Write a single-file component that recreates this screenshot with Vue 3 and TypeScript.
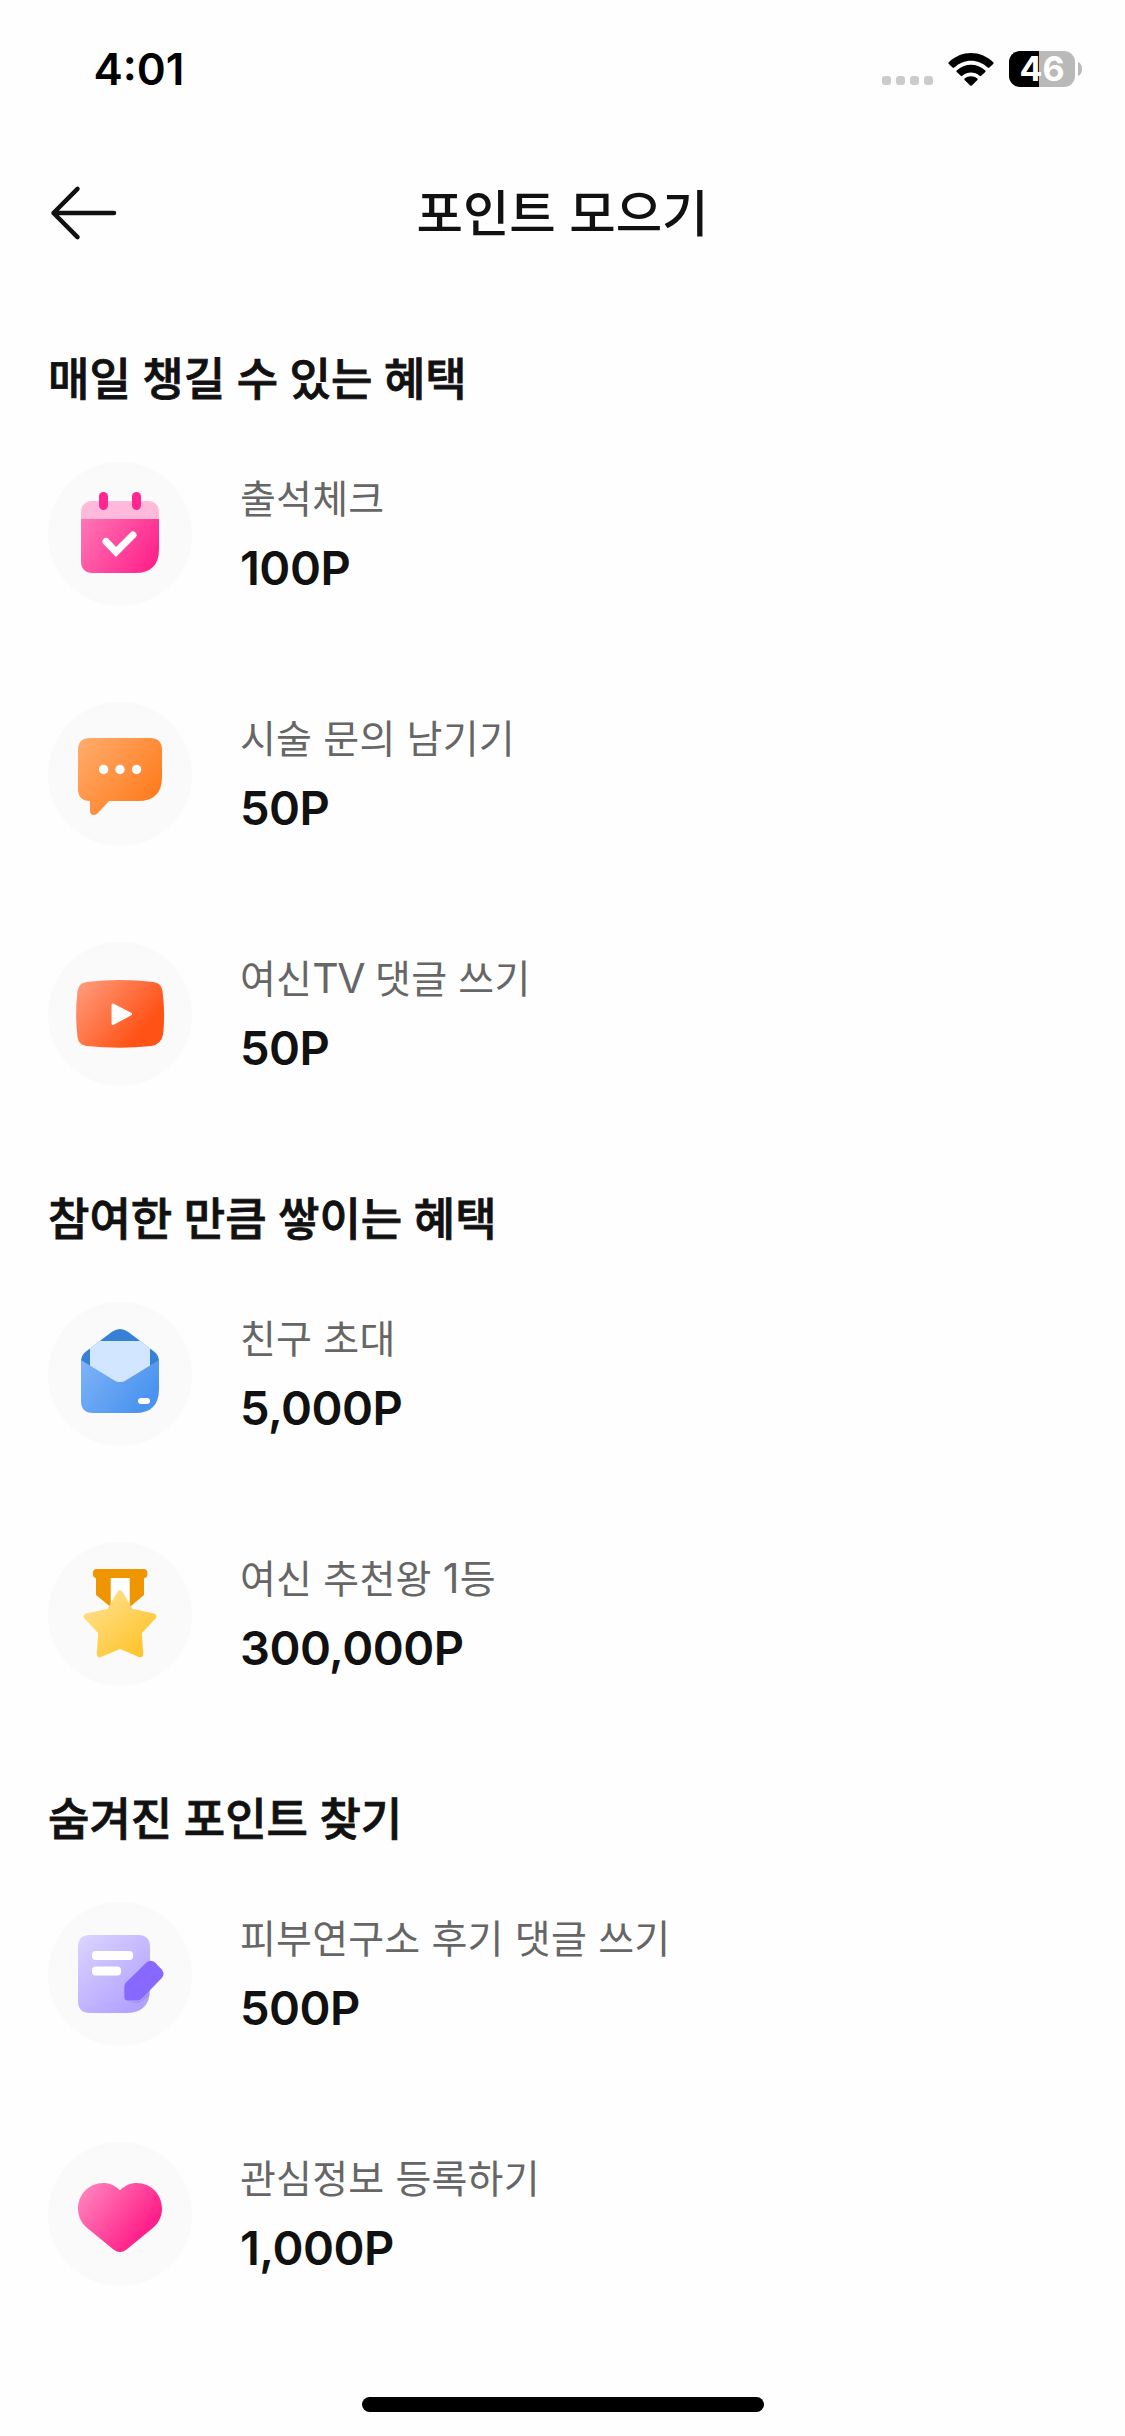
<script setup lang="ts">
type IconName = 'calendar' | 'chat' | 'video' | 'mail' | 'medal' | 'note' | 'heart'

interface TextRun {
  text: string
  kind?: 'latin' | 'digit'
}

interface Mission {
  icon: IconName
  label: TextRun[]
  point: string
}

interface Section {
  title: string
  missions: Mission[]
}

const sections: Section[] = [
  {
    title: '매일 챙길 수 있는 혜택',
    missions: [
      { icon: 'calendar', label: [{ text: '출석체크' }], point: '100P' },
      { icon: 'chat', label: [{ text: '시술 문의 남기기' }], point: '50P' },
      {
        icon: 'video',
        label: [{ text: '여신' }, { text: 'TV', kind: 'latin' }, { text: ' 댓글 쓰기' }],
        point: '50P',
      },
    ],
  },
  {
    title: '참여한 만큼 쌓이는 혜택',
    missions: [
      { icon: 'mail', label: [{ text: '친구 초대' }], point: '5,000P' },
      {
        icon: 'medal',
        label: [{ text: '여신 추천왕 ' }, { text: '1', kind: 'digit' }, { text: '등' }],
        point: '300,000P',
      },
    ],
  },
  {
    title: '숨겨진 포인트 찾기',
    missions: [
      { icon: 'note', label: [{ text: '피부연구소 후기 댓글 쓰기' }], point: '500P' },
      { icon: 'heart', label: [{ text: '관심정보 등록하기' }], point: '1,000P' },
    ],
  },
]
</script>

<template>
  <div class="screen">
    <div class="status">
      <span class="time">4:01</span>
      <div class="indicators">
        <svg class="signal" width="51" height="9" viewBox="0 0 51 9" fill="#cbcbcb">
          <rect width="9" height="9" rx="3" />
          <rect x="14" width="9" height="9" rx="3" />
          <rect x="28" width="9" height="9" rx="3" />
          <rect x="42" width="9" height="9" rx="3" />
        </svg>
        <svg class="wifi" width="46" height="33" viewBox="0 0 46 33">
          <path d="M.8 9.3Q0 10.1.8 10.9L4.6 14.6Q5.4 15.3 6.3 14.5C15.8 5.4 30.2 5.4 39.7 14.5Q40.6 15.3 41.4 14.6L45.2 10.9Q46 10.1 45.2 9.3C32.6-3.1 13.4-3.1.8 9.3Z" />
          <path d="M8.7 17.4Q8 18.2 8.7 19L12.8 22.8Q13.6 23.5 14.4 22.8C19.4 18.5 26.6 18.5 31.6 22.8Q32.4 23.5 33.2 22.8L37.3 19Q38 18.2 37.3 17.4C29.1 9.8 16.9 9.8 8.7 17.4Z" />
          <path d="M16.6 25.4Q16 26.2 16.6 26.9L22.2 32.4Q23 33.2 23.8 32.4L29.4 26.9Q30 26.2 29.4 25.4C25.7 22.4 20.3 22.4 16.6 25.4Z" />
        </svg>
        <div class="battery"><span>46</span></div>
        <svg class="nub" width="4" height="14" viewBox="0 0 4 14" fill="#b9b9b9">
          <path d="M0 0C2.6 1 4 3.600 4 7S2.600 13 0 14Z" />
        </svg>
      </div>
    </div>

    <header class="bar">
      <svg class="back" width="72" height="60" viewBox="0 0 72 60" fill="none" stroke="#111" stroke-width="4.500" stroke-linecap="round" stroke-linejoin="round">
        <path d="M66 30H5.500M29.500 5.800 5.500 30 29.500 54.200" />
      </svg>
      <h1>포인트 모으기</h1>
      <span class="spacer"></span>
    </header>

    <main>
      <section v-for="section in sections" :key="section.title">
        <h2>{{ section.title }}</h2>
        <ul>
          <li v-for="m in section.missions" :key="m.icon">
            <div class="badge">
              <svg v-if="m.icon === 'calendar'" viewBox="0 0 144 144">
                <defs>
                  <linearGradient id="calendar-fill" x1="34" y1="60" x2="106" y2="106" gradientUnits="userSpaceOnUse">
                    <stop stop-color="#ff74b4" /><stop offset="1" stop-color="#ff2089" />
                  </linearGradient>
                </defs>
                <path d="M33 57V51Q33 39 45 39H99Q111 39 111 51V57Z" fill="#ffbadb" />
                <path d="M33 57H111V87Q111 111 87 111H45Q33 111 33 99Z" fill="url(#calendar-fill)" />
                <rect x="51" y="30" width="9" height="18" rx="4.500" fill="#ff268f" />
                <rect x="84" y="30" width="9" height="18" rx="4.500" fill="#ff268f" />
                <path d="M58 79.500 68 90 85 73" fill="none" stroke="#fff" stroke-width="7" stroke-linecap="round" />
              </svg>

              <svg v-else-if="m.icon === 'chat'" viewBox="0 0 144 144">
                <defs>
                  <linearGradient id="chat-fill" x1="32" y1="40" x2="106" y2="100" gradientUnits="userSpaceOnUse">
                    <stop stop-color="#ffab6b" /><stop offset="1" stop-color="#ff7b1c" />
                  </linearGradient>
                </defs>
                <path d="M42 36H102Q114 36 114 48V75Q114 99 90 99H61L50 111Q48 113 46 113Q42 113 42 109V99Q30 99 30 87V48Q30 36 42 36Z" fill="url(#chat-fill)" />
                <g fill="#fff">
                  <circle cx="55.600" cy="67.500" r="4.700" />
                  <circle cx="72" cy="67.500" r="4.700" />
                  <circle cx="88.600" cy="67.500" r="4.700" />
                </g>
              </svg>

              <svg v-else-if="m.icon === 'video'" viewBox="0 0 144 144">
                <defs>
                  <linearGradient id="video-fill" x1="30" y1="42" x2="90" y2="94" gradientUnits="userSpaceOnUse">
                    <stop stop-color="#ff9b7b" /><stop offset="1" stop-color="#ff5217" />
                  </linearGradient>
                </defs>
                <path d="M38.500 40Q72 36.200 105.500 40Q113.500 41 114.500 49Q117.300 70 115.200 92Q113.500 102 103.500 104Q72 107.600 38.500 104Q30.500 103 29.500 95Q26.700 72 29.500 49Q30.500 41 38.500 40Z" fill="url(#video-fill)" />
                <path d="M65 63 82.500 72 65 81.500Z" fill="#fff" stroke="#fff" stroke-width="3" stroke-linejoin="round" />
              </svg>

              <svg v-else-if="m.icon === 'mail'" viewBox="0 0 144 144">
                <defs>
                  <linearGradient id="mail-fill" x1="34" y1="62" x2="92" y2="108" gradientUnits="userSpaceOnUse">
                    <stop stop-color="#7db2f7" /><stop offset="1" stop-color="#4a94ef" />
                  </linearGradient>
                </defs>
                <path d="M33 60Q33 53 38 49.500L64 29.800Q72 24.200 80 29.800L106 49.500Q111 53 111 60L102 66H42Z" fill="#3680d5" />
                <path d="M42 46 52 39H92L102 46V66L72 84 42 66Z" fill="#d3e6ff" />
                <path d="M33 58 66 78.200Q72 82 78 78.200L111 58V87Q111 111 87 111H45Q33 111 33 99Z" fill="url(#mail-fill)" />
                <rect x="90" y="96" width="12" height="6" rx="3" fill="#fff" />
              </svg>

              <svg v-else-if="m.icon === 'medal'" viewBox="0 0 144 144">
                <defs>
                  <linearGradient id="medal-fill" x1="50" y1="62" x2="92" y2="112" gradientUnits="userSpaceOnUse">
                    <stop stop-color="#ffdc80" /><stop offset="1" stop-color="#fec42c" />
                  </linearGradient>
                </defs>
                <path d="M62 35H82V64H62Z" fill="#fff" />
                <path d="M48 34H62.700V65L48 53ZM81.700 34H96V53L81.700 65Z" fill="#ef9500" />
                <rect x="45" y="27" width="54.300" height="9" rx="3.500" fill="#ef9500" />
                <path d="M72 51.500 82.500 69.500 105.300 74.500 90.800 90 92.200 112.300 72 103.700 51.800 112.300 53.200 90 38.700 74.500 61.500 69.500Z" fill="url(#medal-fill)" stroke="url(#medal-fill)" stroke-width="6" stroke-linejoin="round" />
              </svg>

              <svg v-else-if="m.icon === 'note'" viewBox="0 0 144 144">
                <defs>
                  <linearGradient id="note-fill" x1="32" y1="38" x2="88" y2="104" gradientUnits="userSpaceOnUse">
                    <stop stop-color="#dad2ff" /><stop offset="1" stop-color="#b3a2ff" />
                  </linearGradient>
                </defs>
                <path d="M42 33H90Q102 33 102 45V87Q102 111 78 111H42Q30 111 30 99V45Q30 33 42 33Z" fill="url(#note-fill)" />
                <rect x="44" y="49" width="41" height="9" rx="3.500" fill="#fff" />
                <rect x="44" y="64.500" width="29" height="9" rx="3.500" fill="#fff" />
                <path d="M79 99.500H89Q92 99.500 94 97.500L101 90.500V94L94 99Q91 101.500 87 101Z" fill="#9a85f2" opacity=".6" />
                <path d="M78 80.500 98.500 60.500Q103 57 107 60.500L113.800 67.500Q117.300 72 113.800 76L94 96.500Q92 98.500 89 98.500H80Q76.300 98.500 76.300 95V85Q76.300 82.200 78 80.500Z" fill="#8869ff" />
              </svg>

              <svg v-else viewBox="0 0 144 144">
                <defs>
                  <linearGradient id="heart-fill" x1="36" y1="46" x2="94" y2="92" gradientUnits="userSpaceOnUse">
                    <stop stop-color="#ff82bd" /><stop offset="1" stop-color="#ff2089" />
                  </linearGradient>
                </defs>
                <path d="M72 48.300C67.500 43.500 61.500 41 55.300 41C41 41 30 52.500 30 66.500C30 76 34.500 82.500 41 87.500L65.500 107.500Q72 112.500 78.500 107.500L103 87.500C109.500 82.500 114 76 114 66.500C114 52.500 103 41 88.700 41C82.500 41 76.500 43.500 72 48.300Z" fill="url(#heart-fill)" />
              </svg>
            </div>
            <div class="copy">
              <p class="label"><span v-for="(run, i) in m.label" :key="i" :class="run.kind">{{ run.text }}</span></p>
              <strong class="point">{{ m.point }}</strong>
            </div>
          </li>
        </ul>
      </section>
    </main>

    <div class="home"></div>
  </div>
</template>

<style>
body {
  background: #fefefe;
}
</style>

<style scoped>
.screen {
  display: flex;
  flex-direction: column;
  box-sizing: border-box;
  width: 1125px;
  height: 2436px;
  overflow: hidden;
  background: #fefefe;
  color: #111;
  font-family: "Noto Sans CJK KR", sans-serif;
}

.status {
  display: flex;
  justify-content: space-between;
  align-items: center;
  flex: none;
  height: 138px;
  padding: 0 43px 0 93.500px;
  color: #000;
  box-sizing: border-box;
}

.time {
  font: 600 44px/60px Inter, sans-serif;
}

.indicators {
  display: flex;
  align-items: center;
}

.signal {
  margin: 23px 15px 0 0;
}

.wifi {
  margin-right: 15px;
}

.battery {
  width: 66px;
  height: 36px;
  border-radius: 11px;
  background: linear-gradient(90deg, #000 30px, #b9b9b9 30px);
  color: #fff;
  text-align: center;
  font: 700 34px/36px Inter, sans-serif;
  margin-right: 3px;
}

.bar {
  display: flex;
  align-items: center;
  justify-content: space-between;
  flex: none;
  height: 150px;
  padding: 0 48px;
}

.spacer {
  width: 72px;
}

h1 {
  margin: 0 0 6px;
  font-size: 50.500px;
  line-height: 72px;
  font-weight: 500;
  word-spacing: 2px;
}

main {
  flex: 1;
  padding: 59px 48px 0;
}

h2 {
  margin: 0 0 55px;
  font-size: 45px;
  line-height: 60px;
  font-weight: 500;
  word-spacing: 1.400px;
  -webkit-text-stroke: .8px #111;
}

ul {
  display: flex;
  flex-direction: column;
  gap: 96px;
  margin: 0 0 101px;
  padding: 0;
  list-style: none;
}

li {
  display: flex;
  gap: 48px;
  height: 144px;
}

.badge {
  flex: none;
  width: 144px;
  height: 144px;
  border-radius: 50%;
  background: #fafafa;
}

.badge svg {
  display: block;
}

.copy {
  display: flex;
  flex-direction: column;
  padding-top: 4px;
}

.label {
  margin: 0;
  height: 60px;
  font-size: 39px;
  line-height: 60px;
  letter-spacing: .2px;
  word-spacing: 2.200px;
  color: #666;
  white-space: pre;
}

.latin,
.digit {
  font-family: Inter, sans-serif;
  font-size: 41px;
}

.latin {
  letter-spacing: -1.500px;
}

.digit {
  letter-spacing: .4px;
}

.point {
  margin-top: 6px;
  font: 600 47px/72px Inter, sans-serif;
  letter-spacing: -.5px;
}

.home {
  flex: none;
  align-self: center;
  width: 402px;
  height: 15px;
  margin-bottom: 24px;
  border-radius: 8px;
  background: #000;
}
</style>
